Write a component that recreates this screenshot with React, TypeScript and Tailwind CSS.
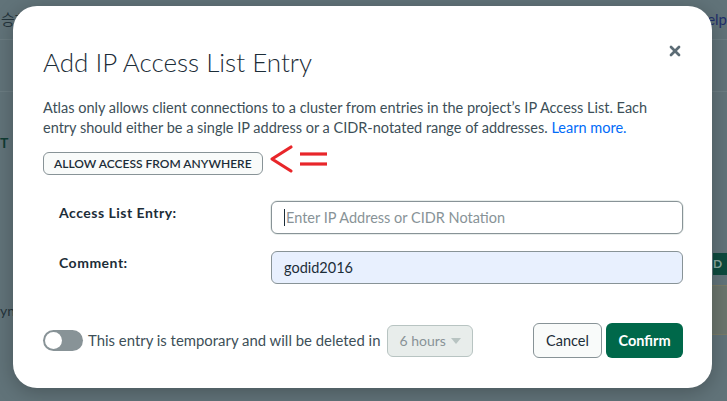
import { X } from 'lucide-react';

function Backdrop() {
  return (
    <div className="absolute inset-0 flex flex-col bg-[#617379] text-[#24343c]">
      <div className="flex h-[40px] items-center justify-between border-b border-[#6b7c82] text-[15px]">
        <span className="pl-[1px]">승하</span>
        <span className="text-[#1f2f6b]">elp</span>
      </div>
      <div className="h-[52px] border-b border-[#6b7c82]" />
      <div className="flex flex-1 flex-col py-[40px]">
        <span className="text-[14px] font-bold text-[#103c33]">T</span>
      </div>
      <div className="absolute right-0 top-[253px] flex h-[22px] w-[14px] items-center bg-[#0d4a3e] text-[12px] font-bold text-[#8aa7a0]">
        D
      </div>
      <div className="absolute right-0 top-[285px] h-[50px] w-[15px] border-y border-[#787a66] bg-[#6b756d]" />
      <div className="absolute left-0 top-[300px] text-[14px]">yn</div>
    </div>
  );
}

function Arrow() {
  return (
    <svg width="62" height="30" viewBox="0 0 62 30" fill="none" className="-mt-[8px] ml-[5px]">
      <polyline points="23,3 4,15 23,27" stroke="#e8262a" strokeWidth="3.2" strokeLinecap="round" strokeLinejoin="round" />
      <line x1="32" y1="10" x2="59" y2="10" stroke="#e8262a" strokeWidth="3.2" />
      <line x1="32" y1="20" x2="59" y2="20" stroke="#e8262a" strokeWidth="3.2" />
    </svg>
  );
}

export default function App() {
  return (
    <div
      className="relative h-[401px] w-[727px] overflow-hidden"
      style={{ fontFamily: 'Lato, "Noto Sans CJK KR", sans-serif' }}
    >
      <Backdrop />

      {/* Modal */}
      <div className="absolute left-[13px] top-[6px] flex h-[382px] w-[699px] flex-col rounded-[24px] bg-white pl-[30px] pr-[29px] pt-[40px] text-[#3d4f58] shadow-[0_4px_20px_rgba(0,0,0,0.25)]">
        <button className="absolute right-[29px] top-[37px] text-[#5c6c75]">
          <X className="h-[16px] w-[16px]" strokeWidth={4} />
        </button>

        <h1 className="text-[26px] font-light leading-[32px] text-[#1c2d38]">Add IP Access List Entry</h1>

        <p className="mt-[20px] text-[14.5px] leading-[20px] text-[#3d4f58]">
          Atlas only allows client connections to a cluster from entries in the project’s IP Access List. Each
          entry should either be a single IP address or a CIDR-notated range of addresses.{' '}
          <a className="text-[#016bf8]">Learn more.</a>
        </p>

        <div className="mt-[14px] flex items-start">
          <button className="h-[23px] rounded-[6px] border border-[#889397] bg-[#f9fbfa] px-[10px] text-[12px] font-semibold leading-[21px] text-[#1c2d38]">
            ALLOW ACCESS FROM ANYWHERE
          </button>
          <Arrow />
        </div>

        <div className="mt-[26px] grid grid-cols-[228px_1fr] gap-y-[17px]">
          <label className="pl-[16px] pt-[1px] text-[14px] font-bold tracking-[0.5px] text-[#1c2d38]">Access List Entry:</label>
          <div className="-m-[1px] rounded-[8px] bg-[#e8edeb] p-[1px]">
            <div className="flex h-[33px] items-center rounded-[6px] border border-[#889397] bg-white pl-[12px] text-[14.5px] text-[#889397]">
              <span className="mr-[1px] h-[17px] w-[1px] bg-[#1c2d38]" />
              Enter IP Address or CIDR Notation
            </div>
          </div>

          <label className="pl-[16px] pt-[1px] text-[14px] font-bold tracking-[0.5px] text-[#1c2d38]">Comment:</label>
          <div className="flex h-[33px] items-center rounded-[6px] border border-[#889397] bg-[#e8f0fe] pl-[12px] text-[14.5px] text-[#1c2d38]">
            godid2016
          </div>
        </div>

        <div className="mt-[39px] flex items-center">
          <div className="relative h-[21px] w-[40px] rounded-full bg-[#889397]">
            <div className="absolute left-[2px] top-[2px] h-[17px] w-[17px] rounded-full bg-white" />
          </div>
          <span className="ml-[5px] text-[14.9px] text-[#3d4f58]">
            This entry is temporary and will be deleted in
          </span>
          <div className="ml-[7px] flex h-[32px] w-[86px] items-center justify-between rounded-[6px] border border-[#b8c4c2] bg-[#e8edeb] px-[11px] text-[14px] text-[#889397]">
            6 hours
            <svg width="10" height="6" viewBox="0 0 10 6">
              <polygon points="0,0 10,0 5,6" fill="#b8c4c2" />
            </svg>
          </div>
          <div className="ml-auto flex gap-[4px]">
            <button className="h-[35px] w-[69px] rounded-[6px] border border-[#889397] bg-[#f9fbfa] text-[14.5px] text-[#1c2d38]">
              Cancel
            </button>
            <button className="h-[35px] w-[77px] rounded-[6px] bg-[#00684a] text-[14.5px] font-bold text-white">
              Confirm
            </button>
          </div>
        </div>
      </div>
    </div>
  );
}
